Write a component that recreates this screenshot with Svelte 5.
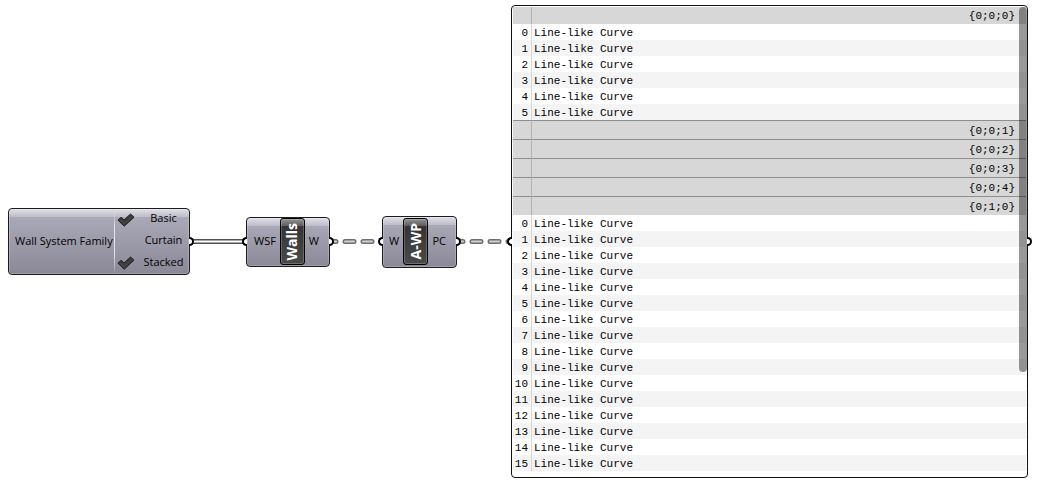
<script>
  let families = $state([
    { name: 'Basic', on: true },
    { name: 'Curtain', on: false },
    { name: 'Stacked', on: true }
  ]);

  const branches = [
    { path: '{0;0;0}', count: 6 },
    { path: '{0;0;1}', count: 0 },
    { path: '{0;0;2}', count: 0 },
    { path: '{0;0;3}', count: 0 },
    { path: '{0;0;4}', count: 0 },
    { path: '{0;1;0}', count: 16 }
  ];
</script>

{#snippet dashed(kind)}
  <svg class="wire {kind}" aria-hidden="true">
    <line class="dash-edge" x1="-3" y1="6.5" x2="100%" y2="6.5" />
    <line class="dash-core" x1="-3" y1="6.5" x2="100%" y2="6.5" />
  </svg>
{/snippet}

<main class="canvas">
  <section class="node family">
    <h2>Wall System Family</h2>
    <div class="options">
      {#each families as family}
        <label>
          <input type="checkbox" bind:checked={family.on} />
          <svg class="tick" viewBox="0 0 18 14" aria-hidden="true">
            <path class="shape" d="M1 7.2 4 4.2 7 7 13.6 1 17 4.2 7.2 13.2Z" />
            <path class="shine" d="M3.2 7.2 7.2 10.6 14.6 4" />
          </svg>
          <span>{family.name}</span>
        </label>
      {/each}
    </div>
    <i class="grip out"></i>
  </section>

  <svg class="wire first" aria-hidden="true">
    <line class="double-edge" x1="0" y1="6.5" x2="100%" y2="6.5" />
    <line class="double-core" x1="0" y1="6.5" x2="100%" y2="6.5" />
  </svg>

  <section class="node walls">
    <i class="grip in"></i>
    <span>WSF</span>
    <h2 class="plate"><b>Walls</b></h2>
    <span>W</span>
    <i class="grip out"></i>
  </section>

  {@render dashed('second')}

  <section class="node panels">
    <i class="grip in"></i>
    <span>W</span>
    <h2 class="plate"><b>A-WP</b></h2>
    <span>PC</span>
    <i class="grip out"></i>
  </section>

  {@render dashed('third')}

  <section class="panel">
    <i class="grip in"></i>
    <table>
      {#each branches as branch}
        <tbody>
          <tr class="branch">
            <td></td>
            <th scope="rowgroup">{branch.path}</th>
          </tr>
          {#each Array(branch.count) as _, i}
            <tr class="item">
              <td>{i}</td>
              <td>Line-like Curve</td>
            </tr>
          {/each}
        </tbody>
      {/each}
    </table>
    <div class="thumb"></div>
    <i class="grip out"></i>
  </section>
</main>

<style>
  :global(body) {
    margin: 0;
    background: #fff;
  }

  .canvas {
    display: flex;
    align-items: center;
    padding: 5px 10px 9px 8px;
    font: 11px/16px "Open Sans", "Noto Sans", sans-serif;
    color: #000;
  }

  .node {
    position: relative;
    flex: none;
    display: flex;
    align-items: center;
    box-sizing: border-box;
    border: 1px solid #1c1c20;
    border-radius: 4px;
    background:
      linear-gradient(#e2e2e8, #bcbbc7) top / 100% 8px no-repeat,
      linear-gradient(#aeadbb, #8b8997);
    box-shadow: inset 0 0 0 1px rgba(255, 255, 255, 0.2);
  }

  h2 {
    margin: 0;
    font: inherit;
    white-space: nowrap;
  }

  .node > span,
  .family h2 {
    padding-bottom: 2px;
  }

  .family {
    width: 182px;
    height: 67px;
    justify-content: space-between;
    padding-left: 6px;
  }

  .options {
    display: flex;
    flex-direction: column;
    height: 100%;
    width: 74px;
    border-left: 1px solid;
    border-image: linear-gradient(transparent, #e4e4ea 30%, #e4e4ea 70%, transparent) 1;
  }

  label {
    flex: 1;
    display: flex;
    align-items: center;
    position: relative;
  }

  label span {
    flex: 1;
    padding: 0 0 3px 3px;
    text-align: center;
  }

  input {
    position: absolute;
    appearance: none;
    margin: 0;
    width: 18px;
    height: 14px;
    left: 2px;
  }

  .tick {
    width: 18px;
    height: 14px;
    margin-left: 2px;
    visibility: hidden;
    pointer-events: none;
  }

  input:checked + .tick {
    visibility: visible;
  }

  .shape {
    fill: #3c3c3c;
    stroke: #1e1e1e;
    stroke-linejoin: round;
  }

  .shine {
    fill: none;
    stroke: #4a4a4a;
  }

  .walls,
  .panels {
    justify-content: space-between;
  }

  .walls {
    width: 84px;
    height: 50px;
    padding: 0 10px 0 7px;
  }

  .panels {
    width: 75px;
    height: 52px;
    padding: 0 10px 0 6px;
  }

  .plate {
    display: flex;
    align-items: center;
    justify-content: center;
    box-sizing: border-box;
    width: 25px;
    height: 47px;
    border: 1px solid #000;
    border-radius: 3px;
    background:
      linear-gradient(#929292, #5c5c5c) top / 100% 7px no-repeat,
      linear-gradient(#303030, #4a4a4a);
    box-shadow: inset 0 0 0 1px rgba(255, 255, 255, 0.2);
    color: #fff;
  }

  .plate b {
    writing-mode: vertical-rl;
    transform: rotate(180deg);
    font-size: 14px;
    line-height: 20px;
  }

  .grip {
    position: absolute;
    top: calc(50% - 5px);
    box-sizing: border-box;
    width: 5px;
    height: 9px;
    border: 2px solid #000;
    background: #fff;
  }

  .grip.out {
    left: 100%;
    border-left: 0;
    border-radius: 0 5px 5px 0;
  }

  .grip.in {
    right: 100%;
    border-right: 0;
    border-radius: 5px 0 0 5px;
  }

  .wire {
    flex: none;
    height: 13px;
  }

  .first {
    width: 56px;
  }

  .second {
    width: 52px;
  }

  .third {
    width: 54px;
  }

  .double-edge {
    stroke: #505050;
    stroke-width: 5;
  }

  .double-core {
    stroke: #fff;
    stroke-width: 2;
  }

  .dash-edge,
  .dash-core {
    stroke-linecap: round;
    stroke-dasharray: 9 9;
  }

  .dash-edge {
    stroke: #6e6e6e;
    stroke-width: 5;
  }

  .dash-core {
    stroke: #d0d0d0;
    stroke-width: 2;
  }

  .panel {
    position: relative;
    flex: 1;
    box-sizing: border-box;
    padding: 1px 1px 6px;
    border: 1px solid #111;
    border-radius: 4px;
    background: #fff;
  }

  table {
    width: 100%;
    border-spacing: 0;
    table-layout: fixed;
    font: 11px/14px "Courier New", "Liberation Mono", monospace;
  }

  td,
  th {
    box-sizing: border-box;
    padding: 2px 0 0 2px;
    font-weight: normal;
    text-align: left;
  }

  td:first-child {
    width: 19px;
    padding: 2px 3px 0 0;
    border-right: 1px solid #d6d6d6;
    text-align: right;
  }

  .branch > * {
    height: 19px;
    border-top: 1px solid #8e8e8e;
    background: #d7d7d7;
  }

  .branch th {
    padding-right: 11px;
    text-align: right;
  }

  .branch td:first-child {
    border-right-color: #b4b4b4;
  }

  tbody:first-child .branch > * {
    height: 17px;
    padding-top: 0;
    border-top: 0;
  }

  .item:nth-child(odd) {
    background: #f4f4f4;
  }

  .thumb {
    position: absolute;
    top: 1px;
    right: 0;
    width: 8px;
    height: 365px;
    border-radius: 4px;
    background: rgba(0, 0, 0, 0.4);
  }
</style>
